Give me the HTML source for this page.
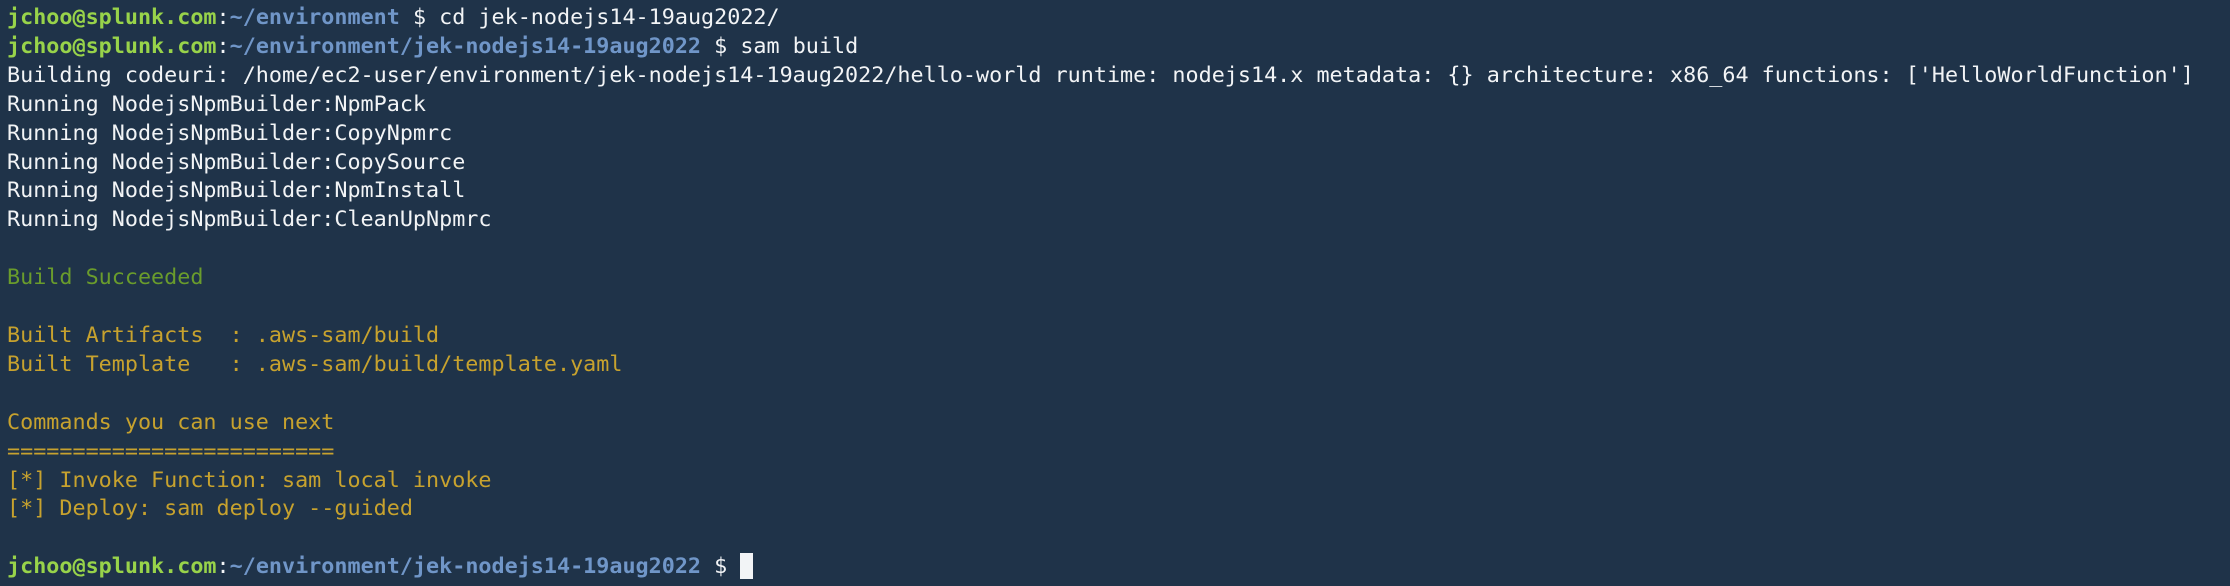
<!DOCTYPE html>
<html><head><meta charset="utf-8"><style>
html,body{margin:0;padding:0;background:#1f3349;width:2230px;height:586px;overflow:hidden}
pre{margin:0;position:absolute;left:7px;top:4px;font-family:"DejaVu Sans Mono","Liberation Mono",monospace;font-size:21.75px;line-height:28.9px;color:#f2f4f6;white-space:pre}
.g{color:#98d34a;font-weight:bold}.b{color:#7096c8;font-weight:bold}.s{color:#6a9c2c}.y{color:#c7a22e}
.c{display:inline-block;width:13px;height:26px;background:#f2f4f6;vertical-align:-6px}
</style></head><body><pre><span class="g">jchoo@splunk.com</span>:<span class="b">~/environment</span> $ cd jek-nodejs14-19aug2022/
<span class="g">jchoo@splunk.com</span>:<span class="b">~/environment/jek-nodejs14-19aug2022</span> $ sam build
Building codeuri: /home/ec2-user/environment/jek-nodejs14-19aug2022/hello-world runtime: nodejs14.x metadata: {} architecture: x86_64 functions: ['HelloWorldFunction']
Running NodejsNpmBuilder:NpmPack
Running NodejsNpmBuilder:CopyNpmrc
Running NodejsNpmBuilder:CopySource
Running NodejsNpmBuilder:NpmInstall
Running NodejsNpmBuilder:CleanUpNpmrc

<span class="s">Build Succeeded</span>

<span class="y">Built Artifacts  : .aws-sam/build
Built Template   : .aws-sam/build/template.yaml

Commands you can use next
=========================
[*] Invoke Function: sam local invoke
[*] Deploy: sam deploy --guided</span>

<span class="g">jchoo@splunk.com</span>:<span class="b">~/environment/jek-nodejs14-19aug2022</span> $ <span class="c"></span></pre></body></html>
